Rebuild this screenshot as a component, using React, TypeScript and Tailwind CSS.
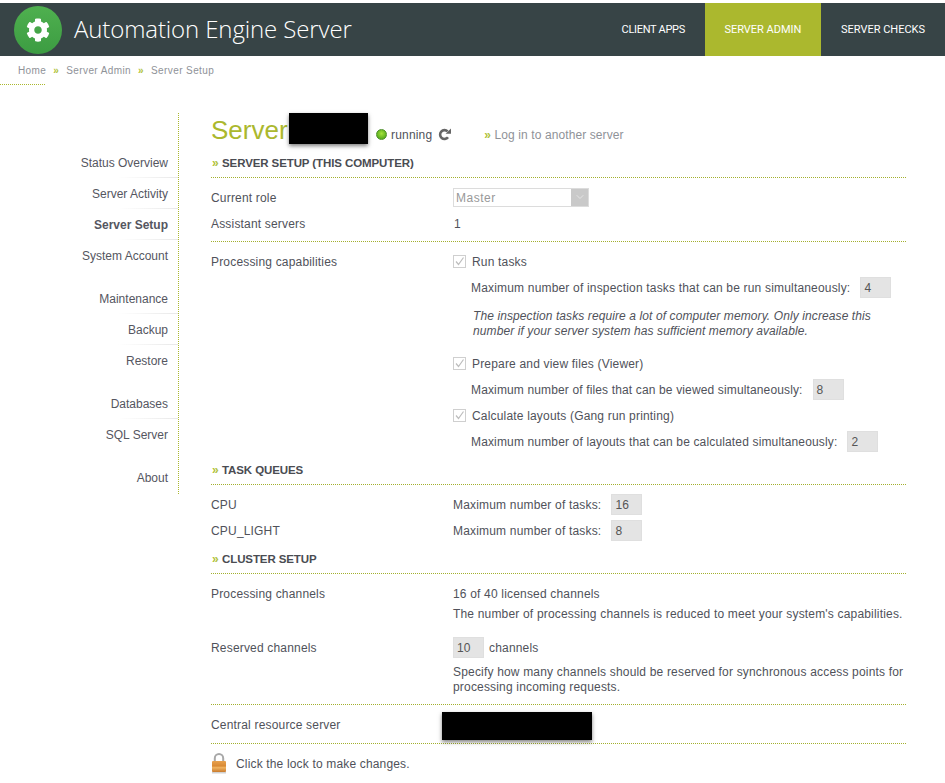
import type { ReactNode } from "react";
import { FaCog } from "react-icons/fa";
import { ChevronDown } from "lucide-react";

const navGroups = [
  ["Status Overview", "Server Activity", "Server Setup", "System Account"],
  ["Maintenance", "Backup", "Restore"],
  ["Databases", "SQL Server"],
  ["About"],
];

function Chevrons() {
  return <span className="text-[#afc23a] font-bold">»</span>;
}

function SectionHead({ children }: { children: ReactNode }) {
  return (
    <div className="h-[29px] pt-[6px] border-b border-dotted border-[#a3b02e] flex items-start leading-[16px]">
      <span className="w-[11px] pl-[1px] text-[12px]">
        <Chevrons />
      </span>
      <span className="text-[11.5px] font-bold text-[#4a4c52] tracking-[-0.1px]">{children}</span>
    </div>
  );
}

function Row({ label, children, className = "h-[26px]" }: { label?: string; children?: ReactNode; className?: string }) {
  return (
    <div className={`grid grid-cols-[242px_1fr] items-center pt-[2px] ${className}`}>
      <div>{label}</div>
      <div className="flex items-center">{children}</div>
    </div>
  );
}

function NumberBox({ value }: { value: string }) {
  return (
    <span className="inline-block -mt-[2px] w-[31px] h-[21px] leading-[20px] pl-[3px] bg-[#e4e4e4] border border-[#dfdfdf] text-[#555]">
      {value}
    </span>
  );
}

function Check({ label }: { label: string }) {
  return (
    <>
      <span className="w-[13px] h-[13px] -mt-[1px] border border-[#cfcfcf] bg-white flex items-center justify-center mr-[6px]">
        <svg width="11" height="11" viewBox="0 0 11 11" fill="none">
          <path d="M2 5.5 L4.5 8.5 L9.5 1.5" stroke="#bdbdbd" strokeWidth="1.2" />
        </svg>
      </span>
      <span>{label}</span>
    </>
  );
}

function RefreshIcon() {
  return (
    <svg width="13" height="13" viewBox="0 0 13 13" className="ml-[6px]" fill="none">
      <path d="M10 9.2 A4.4 4.4 0 1 1 9.6 3.4" stroke="#666" strokeWidth="2.6" />
      <path d="M7.6 5.8 H13 V0.4 Z" fill="#666" />
    </svg>
  );
}

function Lock() {
  return (
    <svg width="16" height="21" viewBox="0 0 16 21">
      <defs>
        <linearGradient id="lockBody" x1="0" y1="0" x2="0" y2="1">
          <stop offset="0" stopColor="#e8a24e" />
          <stop offset="0.45" stopColor="#d98a35" />
          <stop offset="0.6" stopColor="#f0b461" />
          <stop offset="1" stopColor="#c97a2c" />
        </linearGradient>
      </defs>
      <rect x="1" y="18.5" width="14" height="2" fill="#000" opacity="0.18" />
      <path d="M3.8 9 V5.2 a4.2 4.2 0 0 1 8.4 0 V9" fill="none" stroke="#a8a8a8" strokeWidth="2" />
      <rect x="1" y="8" width="14" height="11" rx="1" fill="url(#lockBody)" />
    </svg>
  );
}

export default function App() {
  return (
    <div className="w-[945px] h-[783px] overflow-hidden bg-white pt-[3px] text-[12px] tracking-[0.18px] text-[#50525a] font-['Liberation_Sans',Arial,sans-serif]">
      {/* Header */}
      <header className="h-[53px] bg-[#374446] flex items-stretch justify-between tracking-normal">
        <div className="flex items-center pl-[14px]">
          <div className="w-[48px] h-[48px] rounded-full bg-linear-to-b from-[#4fb04f] to-[#3c9c42] flex items-center justify-center">
            <FaCog className="text-white" size={24} />
          </div>
          <div className="ml-[12px] -mt-[2px] text-[24px] tracking-[-0.12px] font-light text-white font-['Open_Sans',sans-serif]">
            Automation Engine Server
          </div>
        </div>
        <nav className="flex items-stretch text-white text-[11px] pr-[20px] pt-[1px] font-['Roboto',sans-serif]">
          <div className="px-[20px] flex items-center tracking-[-0.3px]">CLIENT APPS</div>
          <div className="w-[116px] -mt-[1px] pt-[1px] flex items-center justify-center bg-[#abb82e]">SERVER ADMIN</div>
          <div className="pl-[20px] flex items-center">SERVER CHECKS</div>
        </nav>
      </header>

      {/* Breadcrumb */}
      <div className="h-[28px] flex items-center pl-[18px] text-[#8f9298] text-[10px] tracking-[0.4px] gap-[7px]">
        <span>Home</span>
        <Chevrons />
        <span>Server Admin</span>
        <Chevrons />
        <span>Server Setup</span>
      </div>
      <div className="w-[45px] border-b border-dotted border-[#abb82e]" />

      <div className="flex mt-[28px] items-start">
        {/* Sidebar */}
        <aside className="w-[179px] h-[381px] border-r border-dotted border-[#abb82e] pt-[34px] flex flex-col gap-[12px] text-[#55565f] tracking-normal">
          {navGroups.map((group) => (
            <ul key={group[0]}>
              {group.map((item, i) => (
                <li
                  key={item}
                  className={`h-[31px] flex items-center justify-end pr-[10px] ${item === "Server Setup" ? "font-bold" : ""} ${
                    i < group.length - 1
                      ? "bg-[linear-gradient(to_left,#e8e8e8,#ffffff)] bg-no-repeat bg-[length:60px_1px] bg-bottom-right"
                      : ""
                  }`}
                >
                  {item}
                </li>
              ))}
            </ul>
          ))}
        </aside>

        {/* Main */}
        <main className="ml-[32px] w-[695px]">
          <div className="h-[36px] flex items-start">
            <span className="w-[78px] text-[26px] tracking-normal leading-[34px] text-[#abb82e]">Server</span>
            <span className="w-[79px] h-[31px] bg-black shadow-[0_2px_4px_rgba(0,0,0,0.5)]" />
            <div className="ml-[8px] mt-[11px] flex items-center h-[20px] pt-[1px]">
              <span className="w-[11px] h-[11px] rounded-full border border-[#4d8f2a] bg-[radial-gradient(circle_at_50%_40%,#a4e23c,#3f9a12)]" />
              <span className="ml-[4px]">running</span>
              <RefreshIcon />
              <span className="ml-[33px] text-[#8f9298] tracking-[0.1px]">
                <Chevrons /> Log in to another server
              </span>
            </div>
          </div>

          <SectionHead>SERVER SETUP (THIS COMPUTER)</SectionHead>
          <div className="pt-[6px] pb-[5px] border-b border-dotted border-[#a3b02e]">
            <Row label="Current role">
              <div className="w-[136px] h-[19px] -mt-[2px] border border-[#dcdcdc] flex items-center justify-between pl-[2px]">
                <span className="text-[#999] tracking-[0.5px] pt-[1px]">Master</span>
                <span className="w-[17px] h-[17px] bg-[#c9c9c9] flex items-center justify-center">
                  <ChevronDown size={12} className="text-[#e4e4e4]" />
                </span>
              </div>
            </Row>
            <Row label="Assistant servers">
              <span className="ml-[1px]">1</span>
            </Row>
          </div>

          <div className="pt-[6px] pb-[2px]">
            <Row label="Processing capabilities">
              <Check label="Run tasks" />
            </Row>
            <Row>
              <span className="ml-[18px] mr-[10px]">Maximum number of inspection tasks that can be run simultaneously:</span>
              <NumberBox value="4" />
            </Row>
            <Row className="h-[32px] mt-[7px]">
              <p className="ml-[20px] w-[410px] italic leading-[15px] tracking-[0.1px]">
                The inspection tasks require a lot of computer memory. Only increase this number if your server system has
                sufficient memory available.
              </p>
            </Row>
            <Row className="h-[26px] mt-[11px]">
              <Check label="Prepare and view files (Viewer)" />
            </Row>
            <Row>
              <span className="ml-[18px] mr-[10px] tracking-[0.14px]">Maximum number of files that can be viewed simultaneously:</span>
              <NumberBox value="8" />
            </Row>
            <Row>
              <Check label="Calculate layouts (Gang run printing)" />
            </Row>
            <Row>
              <span className="ml-[18px] mr-[10px] tracking-[0.15px]">Maximum number of layouts that can be calculated simultaneously:</span>
              <NumberBox value="2" />
            </Row>
          </div>

          <SectionHead>TASK QUEUES</SectionHead>
          <div className="pt-[6px] pb-[2px]">
            <Row label="CPU">
              <span className="mr-[10px]">Maximum number of tasks:</span>
              <NumberBox value="16" />
            </Row>
            <Row label="CPU_LIGHT">
              <span className="mr-[10px]">Maximum number of tasks:</span>
              <NumberBox value="8" />
            </Row>
          </div>

          <SectionHead>CLUSTER SETUP</SectionHead>
          <div className="pt-[6px] border-b border-dotted border-[#a3b02e] h-[131px]">
            <Row label="Processing channels">16 of 40 licensed channels</Row>
            <div className="grid grid-cols-[242px_1fr] h-[15px] mt-[1px] leading-[15px]">
              <div />
              <span className="whitespace-nowrap">The number of processing channels is reduced to meet your system's capabilities.</span>
            </div>
            <Row label="Reserved channels" className="h-[26px] mt-[12px]">
              <NumberBox value="10" />
              <span className="ml-[5px]">channels</span>
            </Row>
            <Row className="h-[32px] mt-[3px]">
              <p className="leading-[15px]">
                Specify how many channels should be reserved for synchronous access points for processing incoming requests.
              </p>
            </Row>
          </div>

          <div className="h-[39px] border-b border-dotted border-[#a3b02e]">
            <Row label="Central resource server" className="h-[38px]">
              <span className="-ml-[11px] mt-[2px] w-[150px] h-[28px] bg-black shadow-[0_2px_4px_rgba(0,0,0,0.5)]" />
            </Row>
          </div>

          <div className="h-[39px] flex items-center">
            <Lock />
            <span className="ml-[9px] tracking-[0.16px]">Click the lock to make changes.</span>
          </div>
        </main>
      </div>
    </div>
  );
}
